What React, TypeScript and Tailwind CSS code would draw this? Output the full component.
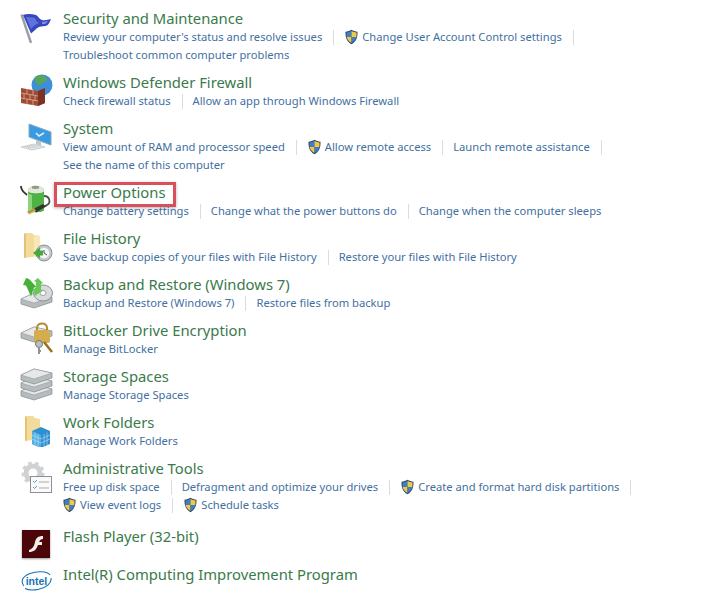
import React from "react";

const Shield = () => (
  <svg width="15" height="16" viewBox="0 0 16 17" className="shrink-0">
    <path d="M8 .8C6 2 4 2.6 1.6 2.8 1.4 8.5 2.6 13 8 16.2 13.4 13 14.6 8.5 14.4 2.8 12 2.6 10 2 8 .8Z" fill="#2c4a6e" />
    <path d="M8 2v6.5H2.8C2.7 7 2.6 5.4 2.7 3.7 4.6 3.5 6.3 3 8 2Z" fill="#3f7fc4" />
    <path d="M8 2c1.700 1 3.400 1.500 5.300 1.700.1 1.700 0 3.300-.1 4.800H8Z" fill="#f3c843" />
    <path d="M2.800 8.500H8v6.300C4.600 12.800 3.200 10.900 2.800 8.500Z" fill="#f3c843" />
    <path d="M8 8.500h5.200c-.4 2.400-1.800 4.300-5.200 6.300Z" fill="#3f7fc4" />
  </svg>
);

const Sep = () => <span className="ml-[11px] mr-[10px] h-[15px] w-px shrink-0 bg-[#d9dde2]" />;

type Link = { t: string; shield?: boolean };
type Row = { title: string; icon: React.ReactNode; lines?: Link[][]; cls?: string };

const L = (t: string, shield?: boolean): Link => ({ t, shield });

const Box = ({ children }: { children: React.ReactNode }) => (
  <svg width="34" height="34" viewBox="0 0 34 34">{children}</svg>
);

const Security = (
  <Box>
    <path d="M1.500 5.500l9.500 28.500" stroke="#9a9fa3" strokeWidth="2.400" />
    <path d="M3 6c4-1.500 9-1 13 0 2 1 3 4 6 5 3 .5 6 0 9-1-1 2.500-2 5-4 6.500-2.500 1-5 .5-8 1.500-3 1.500-5 4-8 6.500Z" fill="#3648bd" />
    <path d="M6 8c3 0 7 0 9 1 1 2 2 4 4 5-3 1-6 3-8 6Z" fill="#5f72de" />
    <path d="M22 12.500c2 .5 4 0 6-.5-1 1.500-2 2.500-3 3-1 0-2 0-3 0Z" fill="#7f8fe8" />
  </Box>
);
const Firewall = (
  <Box>
    <circle cx="22" cy="12" r="10.500" fill="#3f8fd8" />
    <path d="M15 4c5-3 11-1 12 2s-6 3-7 6-6-4-5-8Z" fill="#57a856" />
    <path d="M1 15l17 3 7-3v15l-7 3-17-3Z" fill="#a34a30" />
    <path d="M18 18l7-3v15l-7 3Z" fill="#7a3423" />
    <path d="M1 20l17 3M1 25l17 3M7 16v5M13 17v5M4 21v5M10 22v5M15 23v5M7 26v5M13 27v5" stroke="#d5b3a3" strokeWidth=".8" />
  </Box>
);
const SystemIcon = (
  <Box>
    <path d="M9 5l22 8v13L9 18Z" fill="#3a9ae0" stroke="#8ba9bd" />
    <path d="M16 14l3 3 5-3" stroke="#dff1ff" strokeWidth="1.500" fill="none" />
    <path d="M16 21l5 2v4l-5-2Z" fill="#c0c6cc" />
    <path d="M1 28l13-3 11 3-13 3Z" fill="#dfe2e5" stroke="#b9bdc1" strokeWidth=".6" />
    <path d="M5 28l10-2M8 29l10-2" stroke="#a9adb1" strokeWidth=".6" strokeDasharray="1 1" />
  </Box>
);
const Power = (
  <Box>
    <path d="M1 3c0 5 3 6 6 9" stroke="#2f3231" strokeWidth="1.800" fill="none" />
    <path d="M24 13c6 0 7 7 3 9-1 1-2 1-4 2" stroke="#4a5650" strokeWidth="1.800" fill="none" />
    <path d="M8 8c0-3 3-5 7.500-5S24 5 24 8v19c0 3-16 3-16 0Z" fill="#4eb344" />
    <path d="M8 8c0-3 3-5 7.500-5S24 5 24 8c0 3-16 3-16 0Z" fill="#dfe8da" />
    <path d="M12 3.500c1-1 6-1 7 0v2c-2 .5-5 .5-7 0Z" fill="#8f9c8c" />
    <path d="M8 10c1 1 2 1.500 4 2v17c-2-.5-4-1-4-2Z" fill="#8fd47a" />
    <path d="M13 26l10-5 3 2.500-10 6Z" fill="#33352f" />
    <path d="M7 28.500l7-3.500 2 3-7 3.500Z" fill="#c8b14d" />
    <path d="M8 29.500l6-3" stroke="#7f6f2c" strokeWidth=".7" />
  </Box>
);
const FolderBase = (
  <>
    <path d="M4 4h8l2 2 6 1v20l-16 2Z" fill="#f3dc9b" />
    <path d="M4 4v25l2-.5V6Z" fill="#e5c272" />
    <path d="M14 6l6 1v17l-6 3Z" fill="#f8e8b8" />
  </>
);
const FileHist = (
  <Box>
    {FolderBase}
    <circle cx="24" cy="24" r="8" fill="#c5c9cc" stroke="#8d9296" />
    <circle cx="24" cy="24" r="5.300" fill="#f4f5f5" />
    <path d="M24 21v3l3 2" stroke="#555" fill="none" />
    <path d="M13 24l7-5.500v3h3v5h-3v3Z" fill="#47a83f" />
  </Box>
);
const WorkF = (
  <Box>
    <path d="M5 3h8l2 2 5 1v20l-15 2Z" fill="#f3dc9b" />
    <path d="M5 3v25l2-.5V5Z" fill="#e5c272" />
    <path d="M12 18l9-4 9 4v13l-9 4-9-4Z" fill="#2f8fd0" />
    <path d="M12 18l9 4v13l-9-4Z" fill="#53aee6" />
    <path d="M12 22l9 4M12 26l9 4M21 26l9-4M21 30l9-4M15 19.500v13M18 21v13M24 21v13M27 19.500v13" stroke="#bfe2f6" strokeWidth=".6" />
  </Box>
);
const Drive = (y: number) => (
  <g transform={`translate(0 ${y})`}>
    <path d="M1 8l13-6 18 4v5L14 17 1 13Z" fill="#b6bbbe" stroke="#85898c" strokeWidth=".7" />
    <path d="M1 8l13 4 18-6-18-4Z" fill="#e6e8e9" stroke="#9da1a4" strokeWidth=".7" />
  </g>
);
const Backup = (
  <Box>
    {Drive(16)}
    <ellipse cx="23" cy="18" rx="9.500" ry="8" fill="#d8dadb" stroke="#8f9396" />
    <ellipse cx="23" cy="18" rx="3" ry="2.500" fill="#fff" stroke="#9da1a4" />
    <path d="M6 3l-3 7 3 .5 5 11 3-9 2.500-.5L9 4Z" fill="#45b03a" />
    <path d="M15 21l-2-7 3-.5V7L14 6l4-3 5 5-2 1v6l3-.5Z" fill="#68c957" />
  </Box>
);
const Bit = (
  <Box>
    {Drive(4)}
    <path d="M17 10V7c0-6 10-6 10 0v3" stroke="#b38a2d" strokeWidth="2" fill="none" />
    <rect x="14" y="9" width="16" height="13" rx="2" fill="#d4ad4e" />
    <circle cx="19" cy="23" r="3.500" fill="#b9bfc3" stroke="#777" />
    <path d="M19 26v7M19 30h2" stroke="#8d9396" strokeWidth="2" />
    <path d="M24 21l8 10" stroke="#9a6f1f" strokeWidth="2.500" />
  </Box>
);
const Storage = (
  <Box>
    {Drive(16)}
    {Drive(8)}
    {Drive(0)}
  </Box>
);
const Admin = (
  <Box>
    <circle cx="13" cy="14" r="7" fill="none" stroke="#cfd1d3" strokeWidth="5" />
    <circle cx="13" cy="14" r="10" fill="none" stroke="#cfd1d3" strokeWidth="3" strokeDasharray="3.500 3.500" />
    <rect x="10.500" y="17.500" width="21" height="16" fill="#fafafa" stroke="#8b9094" />
    <path d="M13 22l1.500 1.500L17 21M13 28l1.500 1.500L17 27" stroke="#5a9bc0" fill="none" />
    <path d="M19 23h10M19 29h10" stroke="#a7abae" />
  </Box>
);
const Flash = (
  <div className="mr-[2px] flex h-[28px] w-[28px] items-center justify-center bg-[#4a0608] shadow-[0_1px_2px_rgba(0,0,0,0.4)]">
    <svg width="18" height="20" viewBox="0 0 18 20">
      <path d="M16 2c-5 0-7 2-8 6-1 5-3 7-6 8v2c5 0 7-2 9-7h4V8h-3c1-2 2-3 4-3Z" fill="#f4ece8" />
    </svg>
  </div>
);
const Intel = (
  <svg width="31" height="21" viewBox="0 0 31 21" className="mr-[1px] mt-[-3px]">
    <path d="M3 16C-1 11 2 6 9 3.500 16 1 26 1 29 5" fill="none" stroke="#1573b5" strokeWidth="1.100" />
    <path d="M30 8c1 5-5 10-13 11.500-6 1-10 .5-13-1" fill="none" stroke="#1573b5" strokeWidth="1.100" />
    <text x="15.500" y="14.500" textAnchor="middle" fontSize="10.500" fontWeight="700" fill="#1573b5" fontFamily="Liberation Sans, sans-serif">intel</text>
  </svg>
);

const rows: Row[] = [
  { title: "Security and Maintenance", icon: Security, lines: [[L("Review your computer's status and resolve issues"), L("Change User Account Control settings", true)], [L("Troubleshoot common computer problems")]] },
  { title: "Windows Defender Firewall", icon: Firewall, lines: [[L("Check firewall status"), L("Allow an app through Windows Firewall")]] },
  { title: "System", icon: SystemIcon, lines: [[L("View amount of RAM and processor speed"), L("Allow remote access", true), L("Launch remote assistance")], [L("See the name of this computer")]] },
  { title: "Power Options", icon: Power, lines: [[L("Change battery settings"), L("Change what the power buttons do"), L("Change when the computer sleeps")]] },
  { title: "File History", icon: FileHist, lines: [[L("Save backup copies of your files with File History"), L("Restore your files with File History")]] },
  { title: "Backup and Restore (Windows 7)", icon: Backup, lines: [[L("Backup and Restore (Windows 7)"), L("Restore files from backup")]] },
  { title: "BitLocker Drive Encryption", icon: Bit, lines: [[L("Manage BitLocker")]] },
  { title: "Storage Spaces", icon: Storage, lines: [[L("Manage Storage Spaces")]] },
  { title: "Work Folders", icon: WorkF, lines: [[L("Manage Work Folders")]] },
  { title: "Administrative Tools", icon: Admin, lines: [[L("Free up disk space"), L("Defragment and optimize your drives"), L("Create and format hard disk partitions", true)], [L("View event logs", true), L("Schedule tasks", true)]] },
  { title: "Flash Player (32-bit)", icon: Flash, cls: "mt-[4px] h-[38px]" },
  { title: "Intel(R) Computing Improvement Program", icon: Intel, cls: "h-[38px]" },
];

export default function App() {
  return (
    <div className="h-[598px] w-[719px] overflow-hidden bg-white pt-[9px] font-['Noto_Sans',sans-serif]">
      {rows.map((r) => (
        <div key={r.title} className={`flex pb-[10px] ${r.cls ?? ""}`}>
          <div className="flex h-[34px] w-[63px] shrink-0 justify-end pr-[9px]">
            <div className="flex w-[34px] items-center justify-center">{r.icon}</div>
          </div>
          <div className="min-w-0 flex-1">
            <div className="relative h-[18px] w-fit whitespace-nowrap text-[14.8px] leading-[18px] text-[#3a7a4b]">
              {r.title}
              {r.title === "Power Options" && (
                <span className="absolute left-[-9px] top-[-1px] h-[25px] w-[122px] border-[3px] border-[#d9505c] shadow-[0_1px_3px_rgba(0,0,0,0.3)]" />
              )}
            </div>
            {r.lines?.map((line, i) => (
              <div key={i} className="flex h-[18px] items-center pt-[2px] text-[11.2px] leading-[16px] text-[#3f709f]">
                {line.map((l, j) => (
                  <React.Fragment key={l.t}>
                    {l.shield && <span className={`mr-[3px] flex ${j === 0 ? "ml-[-1px]" : ""}`}><Shield /></span>}
                    <span className="whitespace-nowrap">{l.t}</span>
                    {(j < line.length - 1 || l.t.startsWith("Change User") || l.t.startsWith("Launch") || l.t.startsWith("Create")) && <Sep />}
                  </React.Fragment>
                ))}
              </div>
            ))}
          </div>
        </div>
      ))}
    </div>
  );
}
